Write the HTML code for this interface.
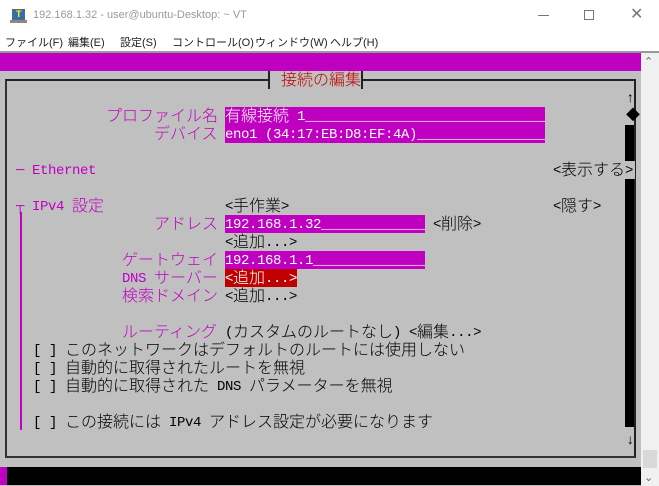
<!DOCTYPE html>
<html><head><meta charset="utf-8"><style>
*{margin:0;padding:0;box-sizing:border-box}
body{width:659px;height:486px;overflow:hidden;background:#fff;position:relative;font-family:"Liberation Sans","Noto Sans CJK JP",sans-serif}
.a{position:absolute;white-space:pre}
.t{font-family:"Liberation Mono","Noto Sans CJK JP",monospace;font-size:14px;letter-spacing:-0.4px;line-height:18px;height:18px;padding-top:1px}
.j{font-family:"Noto Sans CJK JP",monospace;font-size:16px;letter-spacing:0;line-height:18px;font-weight:300;display:inline-block;vertical-align:top;height:18px;transform:translateY(-3px)}
.m{color:#c000c0}.k{color:#000}.w{color:#fff}
.f{background:#c000c0;color:#fff;overflow:hidden}
.mn{font-size:11px;color:#222;top:34px}
</style></head><body>
<!-- title bar -->
<div class="a" style="left:12px;top:9px;width:13px;height:11px;background:#2e6fb7;border:1px solid #666"></div>
<div class="a" style="left:16px;top:9px;font-size:9px;color:#ff0;font-weight:bold">T</div>
<div class="a" style="left:10px;top:20px;width:17px;height:3px;background:#888"></div>
<div class="a" style="left:33px;top:9px;font-size:11px;color:#999">192.168.1.32 - user@ubuntu-Desktop: ~ VT</div>
<div class="a" style="left:538px;top:15px;width:11px;height:1px;background:#777"></div>
<div class="a" style="left:584px;top:10px;width:10px;height:10px;border:1px solid #777"></div>
<div class="a" style="left:630px;top:4px;font-size:16px;color:#777">✕</div>
<!-- menu -->
<div class="a mn" style="left:5px">ファイル(F)</div>
<div class="a mn" style="left:68px">編集(E)</div>
<div class="a mn" style="left:120px">設定(S)</div>
<div class="a mn" style="left:172px">コントロール(O)</div>
<div class="a mn" style="left:255px">ウィンドウ(W)</div>
<div class="a mn" style="left:330px">ヘルプ(H)</div>
<div class="a" style="left:0;top:51px;width:659px;height:2px;background:#999"></div>
<!-- terminal -->
<div class="a" style="left:0;top:53px;width:641px;height:433px;background:#c0c0c0"></div>
<div class="a" style="left:0;top:53px;width:641px;height:18px;background:#c000c0"></div>
<div class="a" style="left:641px;top:53px;width:18px;height:433px;background:#f0f0f0"></div>
<div class="a" style="left:644px;top:55px;font-size:11px;color:#666">⌃</div>
<div class="a" style="left:644px;top:471px;font-size:11px;color:#666">⌄</div>
<div class="a" style="left:643px;top:450px;width:14px;height:18px;background:#d8d8d8"></div>
<div class="a" style="left:0;top:467px;width:641px;height:18px;background:#000"></div>
<div class="a" style="left:0;top:467px;width:7px;height:18px;background:#c000c0"></div>
<!-- box -->
<div class="a" style="left:5px;top:79px;width:631px;height:379px;border:2px solid #222;border-color:#222 #222 #333 #333"></div>
<div class="a" style="left:268px;top:71px;width:2px;height:18px;background:#222"></div>
<div class="a" style="left:361px;top:71px;width:2px;height:18px;background:#222"></div>
<div class="a" style="left:270px;top:71px;width:91px;height:18px;background:#c0c0c0"></div>
<div class="a t j" style="left:281px;top:71px;color:#c00000">接続の編集</div>
<!-- scrollbar -->
<div class="a t k" style="left:626px;top:89px">↑</div>
<div class="a t k" style="left:626px;top:107px">◆</div>
<div class="a" style="left:625px;top:125px;width:9px;height:302px;background:#000"></div>
<div class="a t k" style="left:626px;top:431px">↓</div>
<!-- content -->
<div class="a t m j" style="left:106px;top:107px">プロファイル名</div>
<div class="a t f" style="left:225px;top:107px;width:320px"><span class="j">有線接続</span> 1______________________________</div>
<div class="a t m j" style="left:154px;top:125px">デバイス</div>
<div class="a t f" style="left:225px;top:125px;width:320px">eno1 (34:17:EB:D8:EF:4A)________________</div>
<div class="a t m" style="left:16px;top:161px">─ Ethernet</div>
<div class="a t k" style="left:553px;top:161px;background:#c0c0c0;width:82px">&lt;<span class="j">表示する</span>&gt;</div>
<div class="a t m" style="left:16px;top:197px">┬ IPv4 <span class="j">設定</span></div>
<div class="a t k" style="left:225px;top:197px">&lt;<span class="j">手作業</span>&gt;</div>
<div class="a t k" style="left:553px;top:197px">&lt;<span class="j">隠す</span>&gt;</div>
<div class="a" style="left:20px;top:212px;width:2px;height:218px;background:#c000c0"></div>
<div class="a t m j" style="left:154px;top:215px">アドレス</div>
<div class="a t f" style="left:225px;top:215px;width:200px">192.168.1.32_____________</div>
<div class="a t k" style="left:433px;top:215px">&lt;<span class="j">削除</span>&gt;</div>
<div class="a t k" style="left:225px;top:233px">&lt;<span class="j">追加</span>...&gt;</div>
<div class="a t m j" style="left:122px;top:251px">ゲートウェイ</div>
<div class="a t f" style="left:225px;top:251px;width:200px">192.168.1.1______________</div>
<div class="a t m" style="left:122px;top:269px">DNS <span class="j">サーバー</span></div>
<div class="a t w" style="left:225px;top:269px;width:72px;background:#c00000">&lt;<span class="j">追加</span>...&gt;</div>
<div class="a t m j" style="left:122px;top:287px">検索ドメイン</div>
<div class="a t k" style="left:225px;top:287px">&lt;<span class="j">追加</span>...&gt;</div>
<div class="a t m j" style="left:122px;top:323px">ルーティング</div>
<div class="a t k" style="left:225px;top:323px">(<span class="j">カスタムのルートなし</span>) &lt;<span class="j">編集</span>...&gt;</div>
<div class="a t k" style="left:33px;top:341px">[ ] <span class="j">このネットワークはデフォルトのルートには使用しない</span></div>
<div class="a t k" style="left:33px;top:359px">[ ] <span class="j">自動的に取得されたルートを無視</span></div>
<div class="a t k" style="left:33px;top:377px">[ ] <span class="j">自動的に取得された</span> DNS <span class="j">パラメーターを無視</span></div>
<div class="a t k" style="left:33px;top:413px">[ ] <span class="j">この接続には</span> IPv4 <span class="j">アドレス設定が必要になります</span></div>
</body></html>
